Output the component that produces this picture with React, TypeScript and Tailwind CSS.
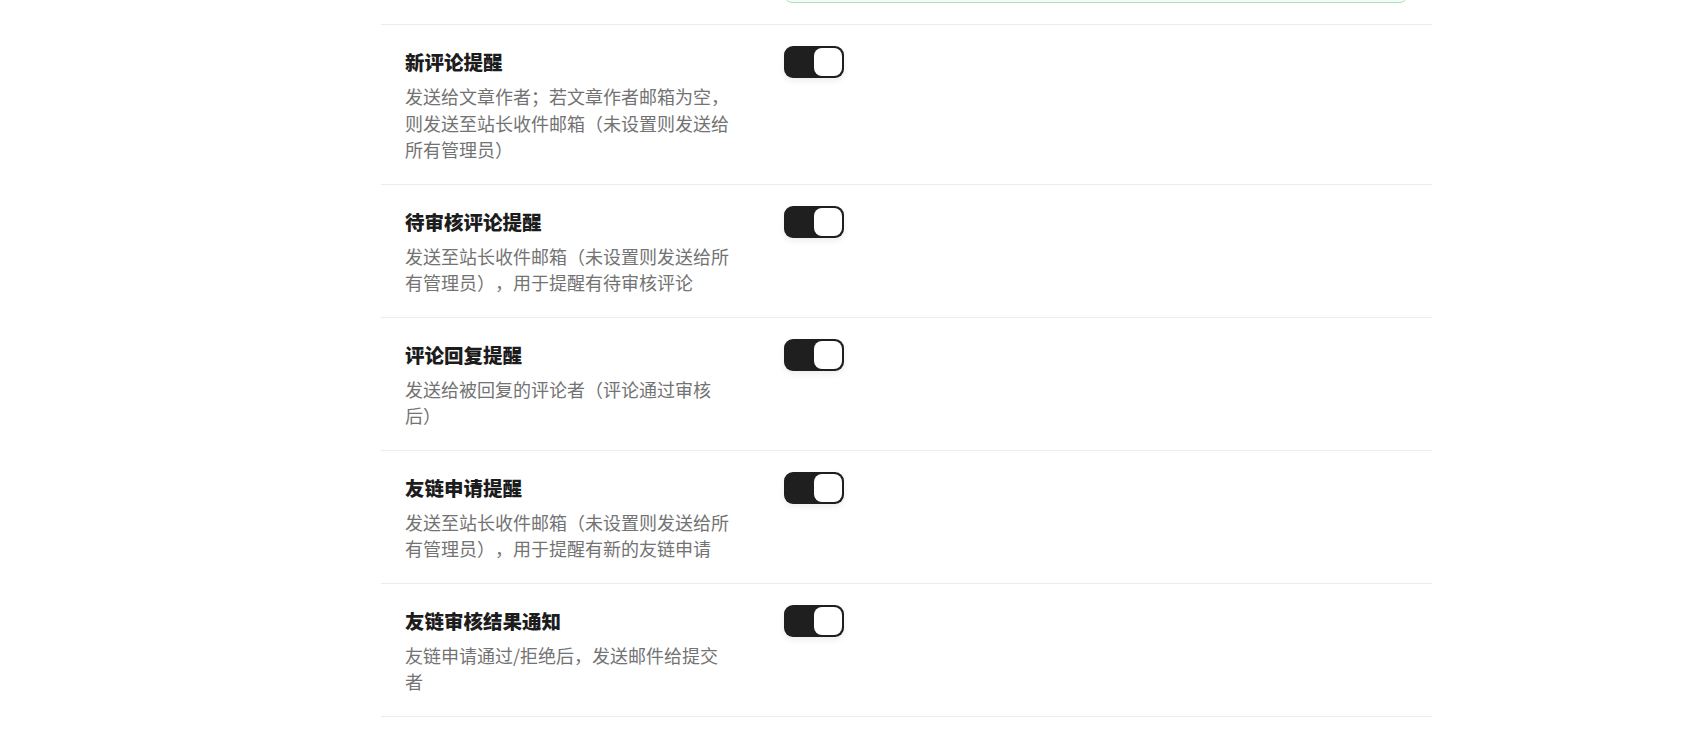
import { useState } from 'react'

const ITEMS = [
  {
    key: 'new-comment',
    title: '新评论提醒',
    desc: '发送给文章作者；若文章作者邮箱为空，则发送至站长收件邮箱（未设置则发送给所有管理员）',
  },
  {
    key: 'pending-comment',
    title: '待审核评论提醒',
    desc: '发送至站长收件邮箱（未设置则发送给所有管理员），用于提醒有待审核评论',
  },
  {
    key: 'comment-reply',
    title: '评论回复提醒',
    desc: '发送给被回复的评论者（评论通过审核后）',
  },
  {
    key: 'friend-apply',
    title: '友链申请提醒',
    desc: '发送至站长收件邮箱（未设置则发送给所有管理员），用于提醒有新的友链申请',
  },
  {
    key: 'friend-result',
    title: '友链审核结果通知',
    desc: '友链申请通过/拒绝后，发送邮件给提交者',
  },
]

function Toggle({ on, onChange }: { on: boolean; onChange: () => void }) {
  return (
    <button
      type="button"
      role="switch"
      aria-checked={on}
      onClick={onChange}
      className={`flex h-[32px] w-[60px] items-center rounded-[9px] p-[2px] shadow-[0_3px_6px_rgba(0,0,0,0.07)] transition-colors ${
        on ? 'justify-end bg-[#1f1f1f]' : 'justify-start bg-[#d4d4d4]'
      }`}
    >
      <span className="h-[28px] w-[28px] rounded-[8px] bg-white" />
    </button>
  )
}

export default function App() {
  const [state, setState] = useState<Record<string, boolean>>(
    Object.fromEntries(ITEMS.map((i) => [i.key, true]))
  )

  return (
    <div className="min-h-screen bg-white font-['Noto_Sans_CJK_SC','Noto_Sans',sans-serif] [text-spacing-trim:space-all]">
      <div className="ml-[381px] w-[1051px]">
        {/* tail of the section above */}
        <div className="grid h-[24px] grid-cols-[328px_1fr] gap-x-[51px] px-6">
          <div />
          <div className="-mt-[37px] h-[40px] rounded-lg border border-[#a9e2c0] bg-[#f4fbf7]" />
        </div>

        <div className="divide-y divide-[#ececec] border-y border-[#ececec]">
          {ITEMS.map((item) => (
            <div
              key={item.key}
              className="grid grid-cols-[328px_1fr] gap-x-[51px] px-6 pt-[21px] pb-[21px]"
            >
              <div>
                <p className="text-[19.5px] font-extrabold leading-[32px] text-[#1c1c1c]">{item.title}</p>
                <p className="mt-[5px] text-[18px] leading-[26.5px] text-[#737373]">{item.desc}</p>
              </div>
              <div>
                <Toggle
                  on={state[item.key]}
                  onChange={() => setState((s) => ({ ...s, [item.key]: !s[item.key] }))}
                />
              </div>
            </div>
          ))}
        </div>
      </div>
    </div>
  )
}
